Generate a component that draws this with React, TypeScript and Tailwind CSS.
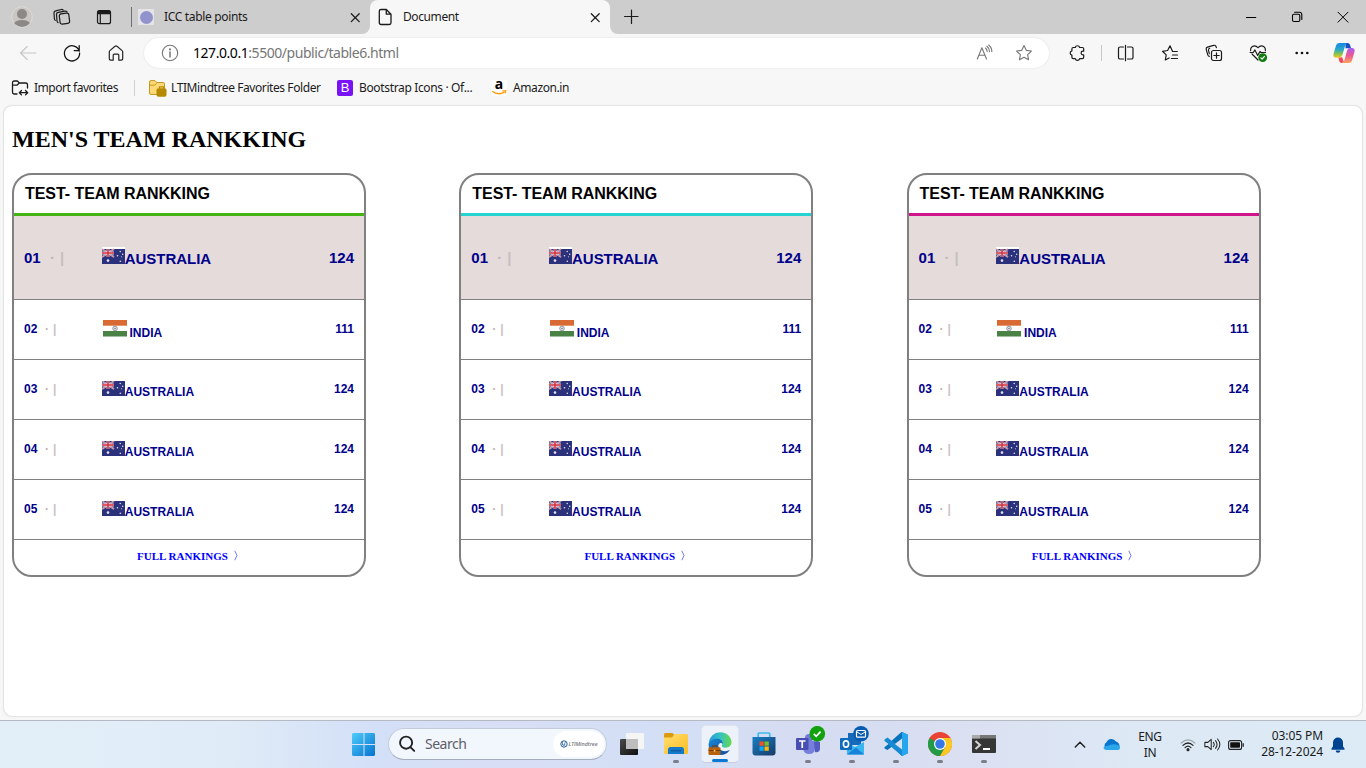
import type { ReactNode } from "react";

const ui = "font-['Noto_Sans',sans-serif] whitespace-nowrap";

function Cell({ w = "w-11", children }: { w?: string; children: ReactNode }) {
  return <div className={`flex h-full shrink-0 items-center justify-center ${w}`}>{children}</div>;
}

function Line({ size = 20, color = "#1b1b1b", sw = 1.1, children }: { size?: number; color?: string; sw?: number; children: ReactNode }) {
  return (
    <svg width={size} height={size} viewBox="0 0 20 20" fill="none" stroke={color} strokeWidth={sw} strokeLinecap="round" strokeLinejoin="round" className="block shrink-0">
      {children}
    </svg>
  );
}

function CloseX() {
  return (
    <Line size={20} sw={1.3}>
      <path d="M6.3 6.7 14.200 14.600M14.200 6.700 6.300 14.600" />
    </Line>
  );
}

function TabStrip() {
  return (
    <div className="flex h-[34px] bg-[#cdcdcd]">
      <Cell>
        <svg width="22" height="22" viewBox="0 0 22 22" className="block">
          <defs><clipPath id="av"><circle cx="11" cy="11" r="10" /></clipPath></defs>
          <circle cx="11" cy="11" r="10.3" fill="#c9c6c3" stroke="#dedbd6" strokeWidth="1" />
          <g fill="#8b8886" clipPath="url(#av)"><circle cx="11" cy="8" r="5" /><ellipse cx="11" cy="18.4" rx="8.3" ry="4.3" /></g>
        </svg>
      </Cell>
      <Cell w="w-9">
        <Line sw={1.2}>
          <rect x="7.700" y="6.500" width="9.600" height="10.300" rx="2" transform="rotate(-7 12 12)" />
          <path d="M6 15.600Q5.100 15 5 14L4.500 7.400a2 2 0 0 1 1.700-2.100l6.900-1.200a2 2 0 0 1 1.900.8" />
          <path d="M3.200 13.300q-.700-.500-.800-1.500L2 6a2 2 0 0 1 1.700-2.100l5.700-1.400a2 2 0 0 1 1.700.5" />
        </Line>
      </Cell>
      <Cell w="w-12">
        <Line sw={1.2}>
          <rect x="3.500" y="3.700" width="13" height="13" rx="2" />
          <path d="M3.600 5.400q.200-1.500 1.800-1.500h9.200q1.600 0 1.800 1.500v1.200H3.600z" fill="#1b1b1b" />
          <path d="M6.300 7v9.500" />
        </Line>
      </Cell>
      <div className="ml-[3px] mt-[7px] h-5 w-px bg-[#6e6e6e]" />
      <div className="flex w-[238px] items-center">
        <div className="ml-[6px] flex h-4 w-4 items-center justify-center bg-[#e3e3e8]">
          <div className="h-[13px] w-[13px] rounded-full bg-[#9292cd]" />
        </div>
        <span className={`${ui} ml-[10px] text-[12px] leading-4 tracking-[-0.33px] text-[#1b1b1b]`}>ICC table points</span>
        <div className="mr-[5px] ml-auto"><CloseX /></div>
      </div>
      <div className="relative flex w-60 items-center rounded-t-lg bg-[#f7f7f7]">
        <svg className="absolute bottom-0 -left-2" width="8" height="8"><path d="M8 0v8H0A8 8 0 0 0 8 0" fill="#f7f7f7" /></svg>
        <svg className="absolute -right-2 bottom-0" width="8" height="8"><path d="M0 0v8h8A8 8 0 0 1 0 0" fill="#f7f7f7" /></svg>
        <div className="ml-[5px]">
          <Line sw={1.3}>
            <path d="M6 2.500h5.300L16 7.200v8.600a1.700 1.700 0 0 1-1.700 1.700H6a1.700 1.700 0 0 1-1.700-1.700V4.200A1.700 1.700 0 0 1 6 2.500ZM11.300 2.700v4.500h4.500" />
          </Line>
        </div>
        <span className={`${ui} ml-2 text-[12px] leading-4 tracking-[-0.4px] text-[#1b1b1b]`}>Document</span>
        <div className="mr-[5px] ml-auto"><CloseX /></div>
      </div>
      <Cell w="w-[42px]"><Line sw={1.2}><path d="M3.500 9.500h13.500M10.500 3v13.500" /></Line></Cell>
      <div className="ml-auto flex">
        <Cell w="w-[46px]"><Line sw={1} color="#000"><path d="M5.300 10.500h9.500" /></Line></Cell>
        <Cell w="w-[46px]">
          <Line sw={1.1} color="#000"><rect x="5.500" y="7.200" width="7.300" height="7.300" rx="1.400" /><path d="M7.600 5.200h5a2.200 2.200 0 0 1 2.200 2.200v5" /></Line>
        </Cell>
        <Cell w="w-[46px]"><Line sw={1} color="#000"><path d="M5 5.200 15 15.200M15 5.200 5 15.200" /></Line></Cell>
      </div>
    </div>
  );
}

const star = "M10 2.6l2.25 4.75 5.15.7-3.75 3.6.92 5.15L10 14.3l-4.57 2.5.92-5.15L2.6 8.05l5.15-.7z";

function Toolbar() {
  return (
    <div className="flex h-[38px] items-center bg-[#f7f7f7] pl-[6px]">
      <Cell><Line color="#c6c6c6"><path d="M18 10H2.500M9.200 3.500 2.500 10l6.700 6.500" /></Line></Cell>
      <Cell><Line color="#111" sw={1.25}><path d="M17.300 8.200A7.600 7.600 0 1 0 17.600 10M17.200 2.600v5h-5" /></Line></Cell>
      <Cell><Line color="#222" sw={1.2}><path d="M3.300 8.800a1.600 1.600 0 0 1 .6-1.200l5.100-4.300a1.500 1.500 0 0 1 2 0l5.100 4.300a1.600 1.600 0 0 1 .6 1.200v7a1.400 1.400 0 0 1-1.400 1.400h-2.500v-5a1 1 0 0 0-1-1H8.200a1 1 0 0 0-1 1v5H4.700a1.400 1.400 0 0 1-1.400-1.400z" /></Line></Cell>
      <div className="ml-[6px] flex h-[30px] w-[905px] items-center rounded-full bg-white shadow-[0_0_2px_rgba(0,0,0,0.12)]">
        <div className="ml-4"><Line color="#767676"><circle cx="10" cy="10" r="7.700" /><path d="M10 9v5" strokeWidth="1.500" /><circle cx="10" cy="6.400" r=".5" fill="#767676" /></Line></div>
        <span className={`${ui} ml-[13px] text-[14px] leading-5 tracking-[-0.45px] text-[#767676]`}>
          <span className="text-black">127.0.0.1</span>:5500/public/table6.html
        </span>
        <div className="mr-[15px] ml-auto flex gap-[19px]">
          <Line color="#767676"><path d="M2.300 16 6.900 4.700 11.500 16M3.900 12.300h6M10.500 5q1.700 1.400 1.700 3.500M12 3.200q2.600 2 2.500 5.500M13.700 2q3.200 2.500 3.100 6.500" /></Line>
          <Line color="#767676"><path d={star} /></Line>
        </div>
      </div>
      <Cell w="ml-[6px] w-11">
        <Line sw={1.2}><path d="M6.300 4.500h2a2.200 2.200 0 0 1 4.300 0h2.700q1.400 0 1.400 1.400v2.300h-.8a1.800 1.800 0 0 0 0 3.600h.8v2.400q0 1.400-1.400 1.400h-2.700a2.200 2.200 0 0 1-4.300 0h-2q-1.400 0-1.400-1.400v-2.100a2.200 2.200 0 0 1 0-4.300V5.900q0-1.400 1.400-1.400z" /></Line>
      </Cell>
      <div className="ml-[2px] h-4 w-px bg-[#c8c8c8]" />
      <Cell w="ml-[2px] w-11"><Line sw={1.2}><path d="M7.500 4H4.100a1.600 1.600 0 0 0-1.600 1.600v8.800A1.600 1.600 0 0 0 4.100 16h3.400M11.500 4h3.900A1.600 1.600 0 0 1 17 5.600v8.800a1.600 1.600 0 0 1-1.600 1.600h-3.900M9.500 2.300v15.400" /></Line></Cell>
      <Cell>
        <Line sw={1.2}><path d="M17.300 8.500h-4.700L10 2.800 7.600 7.500l-5.100.8 3.700 3.600-.9 5.100 3.800-2M12.500 12h5M11.400 15.500h6.100" /></Line>
      </Cell>
      <Cell>
        <Line sw={1.2}><rect x="7.500" y="7.500" width="10" height="10" rx="2" /><path d="M12.500 9.800v5.400M9.800 12.500h5.400M5.300 13.300q-1.200-.2-1.500-1.500L2.200 6.300q-.3-1.600 1.200-2.200L9.700 2.300q1.500-.3 2.200 1l.5 1.300M5.300 10.600 4.500 7.400q-.3-1.600 1.200-2.100" /></Line>
      </Cell>
      <Cell>
        <Line sw={1.2}>
          <path d="M2.600 7.600q-.400-2.600 1.700-4 3-1.700 5.700 1.100 2.700-2.800 5.700-1.100 2.100 1.400 1.700 4M4 11l6 6M2.100 9.500h3.200l1.600-2.600 2.800 5.500 2.300-3.900 1 1h4.500" />
          <circle cx="14.700" cy="14.600" r="4.400" fill="#107c10" stroke="none" /><path d="m12.900 14.800 1.200 1.200 2.400-2.600" stroke="#fff" />
        </Line>
      </Cell>
      <Cell><Line><g fill="#111" stroke="none"><circle cx="4.700" cy="10" r="1.350" /><circle cx="10" cy="10" r="1.350" /><circle cx="15.300" cy="10" r="1.350" /></g></Line></Cell>
      <div className="ml-[9px]">
        <svg width="22" height="22" viewBox="0 0 22 22" className="block">
          <defs>
            <linearGradient id="c1" x2="0" y2="1"><stop stopColor="#1687e8" /><stop offset=".45" stopColor="#28a9c8" /><stop offset=".75" stopColor="#8dc44a" /><stop offset="1" stopColor="#f3cb22" /></linearGradient>
            <linearGradient id="c2" x2="0" y2="1"><stop stopColor="#a35cf5" /><stop offset=".5" stopColor="#ee5793" /><stop offset="1" stopColor="#ffa45d" /></linearGradient>
          </defs>
          <path d="M12.500 1h2q2 0 2.600 2l.9 3.200h-5.500z" fill="#154fc2" />
          <path d="M6.200 1h8q-1.500.400-2.200 3L9.400 13q-.8 2.700-3.400 2.700H2.600Q-.3 15.400.5 12L3 3.500Q3.800 1 6.200 1z" fill="url(#c1)" />
          <path d="M9.200 15.300 5.500 15.700Q6 21 8.700 21h2.500z" fill="#ed4e59" />
          <path d="M15.700 21h-7q2-.400 2.800-3L14 8.700q.8-2.700 3-2.700h2.300q3 .3 2.200 3.700L19 18.500q-.8 2.500-3.300 2.500z" fill="url(#c2)" />
        </svg>
      </div>
    </div>
  );
}

function Favorites() {
  const label = `${ui} text-[12px] leading-4 text-[#1b1b1b]`;
  return (
    <div className="flex h-[34px] items-center bg-[#f7f7f7] pb-[2px] pl-[10px]">
      <Line sw={1.3}><path d="M7 16H4.200a1.700 1.700 0 0 1-1.700-1.700V4.700A1.700 1.700 0 0 1 4.200 3h3.200l2 2h6.400a1.700 1.700 0 0 1 1.700 1.700V10M2.500 7.200h4.400l2.400-2.200M9.500 14.700h8M11.500 12.500l-2.200 2.200 2.200 2.200M15.500 12.500l2.200 2.200-2.200 2.200" /></Line>
      <span className={`${label} ml-1 w-[86px] tracking-[-0.47px]`}>Import favorites</span>
      <div className="ml-[14px] h-4 w-px bg-[#d0d0d0]" />
      <svg width="18" height="17" viewBox="0 0 18 17" className="ml-[14px]">
        <path d="M.5 2Q.5.600 2 .600h4l1.800 1.900H14q1.500 0 1.500 1.500v10.500H2Q.5 14.500.5 13z" fill="#ffd978" stroke="#c3981f" /><path d="M.7 5.200h5l2.200-2.500" fill="none" stroke="#c3981f" />
        <rect x="7.500" y="8.200" width="10" height="8.500" rx="2" fill="#b58a00" /><path d="M10.500 8.500V6.800h4v1.700" fill="none" stroke="#b58a00" strokeWidth="1.300" />
      </svg>
      <span className={`${label} ml-1 w-[151px] tracking-[-0.42px]`}>LTIMindtree Favorites Folder</span>
      <div className="ml-[15px] flex h-4 w-4 items-center justify-center rounded-[2px] bg-[#7a12f8] font-['Liberation_Sans',sans-serif] text-[13px] leading-4 text-white">B</div>
      <span className={`${label} ml-[6px] w-[114px] tracking-[-0.35px]`}>Bootstrap Icons · Of...</span>
      <div className="ml-[18px] grid h-4 w-4 rounded-[2px] bg-white">
        <span className="col-start-1 row-start-1 -mt-1 text-center font-['Noto_Sans',sans-serif] text-[14px] leading-4 font-bold text-black">a</span>
        <svg width="16" height="16" viewBox="0 0 16 16" className="col-start-1 row-start-1 block"><path d="M1.300 11.300q5.700 4.200 11.700 1M11.500 10.900h3.200l-.7 2.500" fill="none" stroke="#ff9900" strokeWidth="1.400" /></svg>
      </div>
      <span className={`${label} ml-[6px] tracking-[-0.4px]`}>Amazon.in</span>
    </div>
  );
}

function Australia({ lead }: { lead?: boolean }) {
  return (
    <svg width="23" height={lead ? 17 : 15} viewBox={lead ? "0 -2 23 17" : "0 0 23 15"} className="block shrink-0">
      {lead && <rect y="-2" width="23" height="2" fill="#fff" />}
      <rect width="23" height="15" fill="#2c317c" />
      <path d="M0 0 12 8M12 0 0 8" stroke="#d5d0df" strokeWidth="1.700" />
      <path d="M0 0 12 8M12 0 0 8" stroke="#cf3848" strokeWidth=".6" />
      <path d="M6 0v8M0 4h12" stroke="#ded4dc" strokeWidth="2.800" />
      <path d="M6 0v8M0 4h12" stroke="#d73441" strokeWidth="1.600" />
      <g fill="#e3e4f0"><circle cx="6" cy="11.600" r="1.300" /><circle cx="15.500" cy="6.700" r=".8" /><circle cx="18.200" cy="2.400" r=".75" /><circle cx="20.700" cy="5.300" r=".75" /><circle cx="18.300" cy="12.300" r=".8" /><circle cx="19.500" cy="7.800" r=".5" /></g>
    </svg>
  );
}

function India() {
  return (
    <svg width="24" height="17" viewBox="0 0 24 17" className="block shrink-0">
      <rect width="24" height="17" fill="#fff" /><rect width="24" height="5.700" fill="#d96a34" /><rect y="11" width="24" height="5.500" fill="#4a8246" />
      <circle cx="12" cy="8.500" r="2.300" fill="#dfe2e6" stroke="#8b8f97" strokeWidth=".9" /><circle cx="12" cy="8.500" r=".8" fill="#777b89" />
    </svg>
  );
}

const teams = [
  { rank: "02", name: "INDIA", points: "111" },
  { rank: "03", name: "AUSTRALIA", points: "124" },
  { rank: "04", name: "AUSTRALIA", points: "124" },
  { rank: "05", name: "AUSTRALIA", points: "124" },
];

function RankCard({ accent }: { accent: string }) {
  return (
    <section className="h-[404px] w-[354px] shrink-0 overflow-hidden rounded-[20px] border-2 border-[#808080] bg-white font-['Liberation_Sans',Arial,sans-serif] font-bold text-[#00008b]">
      <h2 className={`h-[41px] border-b-[3px] pt-[10px] pl-[11px] text-[16px] leading-[18px] tracking-[-0.05px] text-black ${accent}`}>TEST- TEAM RANKKING</h2>
      <div className="flex h-[84px] border-b border-[#808080] bg-[#e4dbda] px-[10px] text-[15px] leading-[17px]">
        <div className="flex w-[77.75px] pt-[33px]">
          <span className="w-[26px]">01</span>
          <span className="w-[10px] text-[#c0b7b7]">·</span>
          <span className="text-[#c8bfbf]">|</span>
        </div>
        <div className="pt-[31px]"><Australia lead /></div>
        <span className="pt-[34px] tracking-[-0.04px]">AUSTRALIA</span>
        <span className="ml-auto pt-[33px]">124</span>
      </div>
      {teams.map((t) => (
        <div key={t.rank} className="flex h-[60px] border-b border-[#808080] px-[10px] text-[12px] leading-[14px]">
          <div className="flex w-[77.75px] pt-[22px]">
            <span className="w-[21px]">{t.rank}</span>
            <span className="w-[8px] text-[#bdb2b2]">·</span>
            <span className="text-[#cbc3c3]">|</span>
          </div>
          {t.name === "INDIA" ? <div className="mr-[2.75px] ml-px pt-[20px]"><India /></div> : <div className="pt-[21px]"><Australia /></div>}
          <span className={t.name === "INDIA" ? "pt-[26px]" : "pt-[25px]"}>{t.name}</span>
          <span className="ml-auto pt-[22px]">{t.points}</span>
        </div>
      ))}
      <div className="flex h-[35px] justify-center pt-[10px] pr-[2px] font-['Liberation_Serif',serif] text-[11px] leading-[13px] text-[#0000ff]">
        <span>FULL RANKINGS</span>
        <svg width="5" height="11" viewBox="0 0 5 11" className="ml-[6px]" fill="none" stroke="#6666f5" strokeWidth=".9"><path d="m.800.800 2.200 4.700L.800 10.200" /></svg>
      </div>
    </section>
  );
}

function TaskIcon({ children, mark }: { children: ReactNode; mark?: boolean }) {
  return (
    <div className="flex h-full w-11 shrink-0 flex-col items-center">
      <div className="mt-[11px] flex h-6 w-6 justify-center overflow-visible">{children}</div>
      {mark && <div className="mt-[4px] h-[3px] w-[6px] rounded-full bg-[#7b7e89]" />}
    </div>
  );
}

function Taskbar() {
  return (
    <div className="flex h-12 items-start border-t border-[#b5b9c4] bg-[linear-gradient(90deg,#e3eff8_0%,#dfebf7_17%,#d3e0f7_27%,#d8def5_37%,#d3dff6_47%,#d6dcf1_60%,#dbe1f2_72%,#dde9f5_84%,#dcebf6_100%)]">
      <svg width="23" height="23" viewBox="0 0 23 23" className="mt-3 ml-[352px] block">
        <defs><linearGradient id="w" x2="1" y2="1"><stop stopColor="#4fcdfb" /><stop offset="1" stopColor="#0472cf" /></linearGradient></defs>
        <path d="M1 0h10.500v11H0V1zM12.500 0H22l1 1v10H12.500zM0 12h11.500v11H1l-1-1zM12.500 12H23v10l-1 1h-9.500z" fill="url(#w)" />
      </svg>
      <div className="mt-[7px] ml-[13px] flex h-[32px] w-[219px] items-center rounded-full border border-b-[#a5adbe] border-[#c4cbdc] bg-[#f2f6fd]">
        <div className="ml-[9px]"><Line size={18} color="#222" sw={2.1}><circle cx="9" cy="8.500" r="6.700" /><path d="m14 13.700 4 4" /></Line></div>
        <span className={`${ui} ml-[9px] text-[14px] leading-5 tracking-[-0.5px] text-[#5d6068]`}>Search</span>
        <div className="mr-[2px] ml-auto flex h-[26px] w-[51px] items-center justify-center gap-[1px] rounded-full bg-white">
          <svg width="8" height="8" viewBox="0 0 8 8"><circle cx="4" cy="4" r="3.200" fill="none" stroke="#246098" strokeWidth="1" /><path d="M2.500 1.500v3.500h3M3.500 6l2-4" fill="none" stroke="#246098" strokeWidth=".7" /></svg>
          <span className="font-['Open_Sans',sans-serif] text-[5.5px] leading-2 font-semibold tracking-[-0.1px] text-[#777b80] italic">LTIMindtree</span>
        </div>
      </div>
      <div className="ml-[3px] flex h-full">
        <TaskIcon>
          <svg width="24" height="24" viewBox="0 0 24 24"><defs><linearGradient id="tv" x2="1" y2="1"><stop stopColor="#4a4a4a" /><stop offset="1" stopColor="#101010" /></linearGradient></defs><rect y="7" width="18" height="16" rx="1" fill="url(#tv)" /><rect x="6" y="1" width="18" height="16" rx="1" fill="#f5f5f5" /><path d="M6 7h12v10H6z" fill="#bdbdbd" /></svg>
        </TaskIcon>
        <TaskIcon mark>
          <svg width="24" height="24" viewBox="0 0 24 24"><defs><linearGradient id="fo" x2="1" y2="1"><stop stopColor="#ffdd70" /><stop offset="1" stopColor="#fbbd22" /></linearGradient></defs><path d="M0 2.500Q0 1 1.500 1h7L10 2.500v4H0z" fill="#dc9a10" /><path d="M0 5.500h8L10.500 2H22.500Q24 2 24 3.500v17q0 1.500-1.500 1.500h-21Q0 22 0 20.500z" fill="url(#fo)" /><path d="M4 22v-4.500Q4 15 6.500 15h11q2.500 0 2.500 2.500V22z" fill="#1579c9" /><path d="M7 18.800h10" stroke="#0c5190" /></svg>
        </TaskIcon>
        <div className="flex h-full w-11 justify-center">
          <div className="mt-1 flex h-[38px] w-[38px] flex-col items-center rounded-[5px] border border-[#e0e4f0] border-b-[#c7cce0] bg-[#edf1fa]">
            <svg width="24" height="24" viewBox="0 0 24 24" className="mt-[6px] block">
              <defs><linearGradient id="e1" x1="0" x2="1"><stop stopColor="#2698df" /><stop offset=".5" stopColor="#35c2c4" /><stop offset="1" stopColor="#65d94c" /></linearGradient><linearGradient id="e2" x2="1" y2="1"><stop stopColor="#1687d7" /><stop offset="1" stopColor="#124b95" /></linearGradient></defs>
              <path d="M.2 11.500A12 12 0 0 1 12 .200C19 .200 24 5 24 10.700c0 3.300-2.500 5.700-6.200 5.700-2.800 0-4.500-1.200-3.700-2.500 1.400-2.500-.8-5.700-4.800-5.700C4.800 8.200 1.300 9.800.2 11.500z" fill="url(#e1)" />
              <path d="M.2 12.200C.8 9.300 4.500 7 8.600 7c3.900 0 6.700 2.300 6.200 5.400-1-1.500-3.500-1.100-4.300.8-1.200 3.200 2.800 7.400 7.200 6.900 2-.2 3.500-1.200 4.500-1.400-2 3.500-5.600 5.300-10 5.300C5 24-.6 18.800.2 12.200z" fill="url(#e2)" />
              <rect y="16" width="12.500" height="8" rx="1" fill="#b8620f" /><path d="M4 16v-1.500h4.500V16M0 19.300h12.500" stroke="#75380b" fill="none" /><path d="M5.500 18.500h1.700v2H5.500z" fill="#ffc45b" />
            </svg>
            <div className="mt-[4px] h-[3px] w-4 shrink-0 rounded-full bg-[#0878d4]" />
          </div>
        </div>
        <TaskIcon>
          <svg width="24" height="24" viewBox="0 0 24 24"><defs><linearGradient id="st" x2="1" y2="1"><stop stopColor="#1780c5" /><stop offset="1" stopColor="#183967" /></linearGradient></defs><path d="M6.200 6V2q0-1 1-1h9.600q1 0 1 1v4" fill="none" stroke="#3bbbed" strokeWidth="1.700" /><path d="M.5 5h23v15.500q0 3-3 3h-17q-3 0-3-3z" fill="url(#st)" /><path d="M7.500 9.500h4.300v4.300H7.500z" fill="#f05128" /><path d="M12.500 9.500h4.300v4.300h-4.300z" fill="#7ebb26" /><path d="M7.500 14.500h4.300v4.300H7.500z" fill="#12a7ed" /><path d="M12.500 14.500h4.300v4.300h-4.300z" fill="#fdb80b" /></svg>
        </TaskIcon>
        <TaskIcon mark>
          <svg width="30" height="30" viewBox="0 -6 30 30" className="-mt-[6px] -mr-[6px] shrink-0"><circle cx="13" cy="6" r="4" fill="#7279d6" /><circle cx="21" cy="7" r="3" fill="#555fc4" /><path d="M8 9h11v7q0 6-6 6-5 0-6-5z" fill="#777fdc" /><path d="M18 10h6v7q-1 4-5 3z" fill="#545dc0" /><rect y="6" width="12.500" height="12" rx="1" fill="#484eb3" /><path d="M3 9h6.500M6.250 9v7" stroke="#fff" strokeWidth="1.700" /><circle cx="21.300" cy="1.700" r="7.800" fill="#13a10e" /><path d="m17.800 1.900 2.400 2.400 4.400-4.700" fill="none" stroke="#fff" strokeWidth="1.700" /></svg>
        </TaskIcon>
        <TaskIcon mark>
          <svg width="30" height="30" viewBox="0 -6 30 30" className="-mt-[6px] -mr-[6px] shrink-0"><path d="M8 1h13v12H8z" fill="#1769b9" /><path d="m6.500 10 8.500 5 9-5v12.500h-17z" fill="#39b6ef" /><path d="m7 22.500 9-7 8 7z" fill="#1683d8" /><rect y="6" width="12" height="12" rx="1" fill="#0f6cbd" /><ellipse cx="6" cy="12" rx="2.600" ry="3.100" fill="none" stroke="#fff" strokeWidth="1.600" /><circle cx="21" cy="1.800" r="7.800" fill="#075bb0" /><rect x="16.500" y="-1.500" width="9" height="6.700" rx="1" fill="none" stroke="#fff" strokeWidth="1.200" /><path d="m17 0 4 2.500L25 0" fill="none" stroke="#fff" /></svg>
        </TaskIcon>
        <TaskIcon mark>
          <svg width="24" height="24" viewBox="0 0 24 24"><path d="m18 0 6 2.700v18.600L18 24 8 14.500 3.500 18 .5 16.400v-1.500L17.500 0z" fill="#0874bd" /><path d="m.5 7.500 3-2L18 17v7L.5 9.100z" fill="#168bd4" /><path d="m18 0 6 2.700v18.600L18 24z" fill="#25a6ee" /><path d="m18 6.500-7.200 5.500 7.200 5.500z" fill="#d9e1f3" /><path d="M.5 9.300 4.400 12 .5 15z" fill="#d9def2" /></svg>
        </TaskIcon>
        <TaskIcon mark>
          <svg width="24" height="24" viewBox="0 0 24 24"><circle cx="12" cy="12" r="12" fill="#ea4335" /><path d="M12 12 1.600 6A12 12 0 0 0 12 24l5.200-9z" fill="#229b48" /><path d="M12 24A12 12 0 0 0 22.400 6H12l5.200 9z" fill="#fcc920" /><circle cx="12" cy="12" r="6" fill="#fff" /><circle cx="12" cy="12" r="4.800" fill="#3478e5" /></svg>
        </TaskIcon>
        <TaskIcon mark>
          <svg width="24" height="24" viewBox="0 0 24 24"><rect y="3" width="24" height="18" rx="1" fill="#353535" /><path d="M0 6.500V4q0-1 1-1h22q1 0 1 1v2.500z" fill="#777" /><path d="M0 3h8v3.500H0z" fill="#aaa" /><path d="m3.500 9 4.500 4-4.500 4" fill="none" stroke="#d5d5d5" strokeWidth="2" /><path d="M11 17h7" stroke="#fff" strokeWidth="2" /></svg>
        </TaskIcon>
      </div>
      <div className="ml-auto flex h-full items-center">
        <Cell w="w-8"><Line color="#222" sw={1.500}><path d="m5.300 12 4.700-4.700 4.700 4.700" /></Line></Cell>
        <Cell w="w-8"><svg width="18" height="18" viewBox="0 0 18 18"><path d="M4 13.500a4 4 0 0 1-.5-7.200A5.300 5.300 0 0 1 13 5.500q3.800 1 3.500 5.500l-5 2z" fill="#0875ce" /><path d="M4 14q-4-.3-3.300-3L8.500 8.500q6-.6 8 1.600Q18 14 14.500 14z" fill="#29a7ea" /></svg></Cell>
        <div className={`${ui} w-11 text-center text-[12px] leading-4 tracking-[-0.3px] text-[#1b1b1b]`}>ENG<br />IN</div>
        <Cell w="ml-1 w-6"><Line size={16} color="#222" sw={1.500}><path d="M1.500 7.500q8.500-8 17 0" stroke="#9da7ae" /><path d="M3.700 10.500q6.300-6 12.600 0M6.300 13.300q3.700-3.500 7.400 0" /><circle cx="10" cy="15.800" r="1.200" fill="#222" /></Line></Cell>
        <Cell w="w-6"><Line size={17} color="#222" sw={1.200}><path d="M1 7.500h3.500L8.500 4v12l-4-3.500H1zM11 7.500q2 2.500 0 5M13.500 5.500q3.700 4.500 0 9M16 3.500q5.300 6.500 0 13" /></Line></Cell>
        <Cell w="w-6"><svg width="16" height="10" viewBox="0 0 16 10"><rect x=".6" y=".6" width="13" height="8.800" rx="2" fill="none" stroke="#222" strokeWidth="1.100" /><rect x="2.200" y="2.200" width="9.800" height="5.600" rx=".8" fill="#111" /><path d="M15.200 3.300v3.400" stroke="#222" strokeWidth="1.300" /></svg></Cell>
        <div className={`${ui} ml-[3px] w-[72px] pb-[2px] text-right text-[12px] leading-4 tracking-[-0.08px] text-[#1b1b1b]`}>03:05 PM<br />28-12-2024</div>
        <svg width="14" height="16" viewBox="0 0 14 16" className="mr-[21px] ml-2"><path d="M7 .500a5 5 0 0 1 5 5v3.700l1.500 2.300v1.200H.5v-1.200L2 9.200V5.500a5 5 0 0 1 5-5zM4.700 13.500h4.600a2.300 2.300 0 0 1-4.600 0z" fill="#004290" /></svg>
      </div>
    </div>
  );
}

export default function App() {
  return (
    <div className="flex h-[768px] w-[1366px] flex-col overflow-hidden bg-[#f7f7f7]">
      <TabStrip />
      <Toolbar />
      <Favorites />
      <main className="mx-1 mb-[4px] h-[610px] rounded-lg bg-white px-2 pt-[18px] shadow-[0_0_2px_rgba(0,0,0,0.28)]">
        <h1 className="font-['Liberation_Serif',serif] text-[24px] leading-[30px] font-bold text-black">MEN'S TEAM RANKKING</h1>
        <div className="mt-[19px] flex gap-[93.3px]">
          <RankCard accent="border-[#43b315]" />
          <RankCard accent="border-[#25d3d3]" />
          <RankCard accent="border-[#cf138a]" />
        </div>
      </main>
      <Taskbar />
    </div>
  );
}
